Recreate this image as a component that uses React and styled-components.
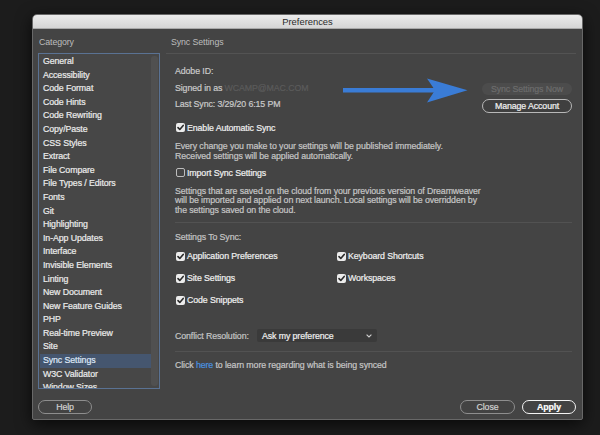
import React from "react";
import styled, { createGlobalStyle } from "styled-components";

const categories = [
  "General",
  "Accessibility",
  "Code Format",
  "Code Hints",
  "Code Rewriting",
  "Copy/Paste",
  "CSS Styles",
  "Extract",
  "File Compare",
  "File Types / Editors",
  "Fonts",
  "Git",
  "Highlighting",
  "In-App Updates",
  "Interface",
  "Invisible Elements",
  "Linting",
  "New Document",
  "New Feature Guides",
  "PHP",
  "Real-time Preview",
  "Site",
  "Sync Settings",
  "W3C Validator",
  "Window Sizes",
];

const syncItems = [
  { label: "Application Preferences", checked: true },
  { label: "Keyboard Shortcuts", checked: true },
  { label: "Site Settings", checked: true },
  { label: "Workspaces", checked: true },
  { label: "Code Snippets", checked: true },
];

const Check = ({ checked }) => (
  <CheckBox $checked={checked}>
    {checked && (
      <svg width="9" height="9" viewBox="0 0 9 9">
        <path
          d="M2 4.6 L3.8 6.4 L7.2 2.4"
          fill="none"
          stroke="#2b2b2b"
          strokeWidth="1.6"
          strokeLinecap="round"
          strokeLinejoin="round"
        />
      </svg>
    )}
  </CheckBox>
);

const App = () => {
  return (
    <Screen>
      <GlobalStyle />
      <Dialog>
        <TitleBar>Preferences</TitleBar>
        <Body>
          <Columns>
            <SideHeading>Category</SideHeading>
            <MainHeading>Sync Settings</MainHeading>
            <ListBox>
              <ListItems>
                {categories.map((name) => (
                  <ListItem key={name} $selected={name === "Sync Settings"}>
                    {name}
                  </ListItem>
                ))}
              </ListItems>
              <ScrollTrack>
                <ScrollThumb />
              </ScrollTrack>
            </ListBox>
            <Panel>
              <TopSection>
                <InfoColumn>
                  <InfoLine>Adobe ID:</InfoLine>
                  <InfoLine>
                    Signed in as <Email>WCAMP@MAC.COM</Email>
                  </InfoLine>
                  <InfoLine>Last Sync: 3/29/20 6:15 PM</InfoLine>
                </InfoColumn>
                <ButtonStack>
                  <SyncNowButton disabled>Sync Settings Now</SyncNowButton>
                  <ManageButton>Manage Account</ManageButton>
                </ButtonStack>
              </TopSection>

              <CheckRow $mt={7.5}>
                <Check checked />
                <CheckLabel>Enable Automatic Sync</CheckLabel>
              </CheckRow>
              <Para $mt={6} $lh={10}>
                Every change you make to your settings will be published
                immediately.
                <br />
                Received settings will be applied automatically.
              </Para>

              <CheckRow $mt={5}>
                <Check checked={false} />
                <CheckLabel>Import Sync Settings</CheckLabel>
              </CheckRow>
              <Para $mt={7} $lh={9.7}>
                Settings that are saved on the cloud from your previous version
                of Dreamweaver
                <br />
                will be imported and applied on next launch. Local settings will
                be overridden by
                <br />
                the settings saved on the cloud.
              </Para>

              <Separator $mt={6} />
              <SectionLabel>Settings To Sync:</SectionLabel>
              <SyncGrid>
                {syncItems.map((item) => (
                  <CheckRow key={item.label}>
                    <Check checked={item.checked} />
                    <CheckLabel>{item.label}</CheckLabel>
                  </CheckRow>
                ))}
              </SyncGrid>

              <ConflictRow>
                <ConflictLabel>Conflict Resolution:</ConflictLabel>
                <Select>
                  Ask my preference
                  <svg width="6" height="4" viewBox="0 0 6 4">
                    <path
                      d="M0.6 0.6 L3 3 L5.4 0.6"
                      fill="none"
                      stroke="#cfcfcf"
                      strokeWidth="1.1"
                    />
                  </svg>
                </Select>
              </ConflictRow>
              <Separator $mt={8.5} />
              <HelpLine>
                Click <LinkText>here</LinkText> to learn more regarding what is
                being synced
              </HelpLine>

              <Arrow width="126" height="27" viewBox="0 0 126 27">
                <rect x="0" y="11" width="92" height="4.5" fill="#3a7cd6" />
                <path d="M84 1.5 L124.5 13.2 L84 25.5 L92 13.2 Z" fill="#3a7cd6" />
              </Arrow>
            </Panel>
          </Columns>
          <Footer>
            <PillButton>Help</PillButton>
            <FooterRight>
              <PillButton $w={55}>Close</PillButton>
              <PillButton $primary>Apply</PillButton>
            </FooterRight>
          </Footer>
        </Body>
      </Dialog>
    </Screen>
  );
};

export default App;

const GlobalStyle = createGlobalStyle`
  html, body {
    margin: 0;
    padding: 0;
    background: #1c1c1c;
  }
  body {
    font-family: "Liberation Sans", Arial, sans-serif;
    font-size: 8.8px;
    letter-spacing: -0.1px;
    -webkit-text-stroke: 0.2px currentColor;
  }
`;

const Screen = styled.div`
  width: 600px;
  height: 435px;
  box-sizing: border-box;
  padding: 14px 0 0 32px;
  background: #1c1c1c;
  overflow: hidden;
`;

const Dialog = styled.div`
  width: 551px;
  height: 406px;
  box-sizing: border-box;
  display: flex;
  flex-direction: column;
  border: 1px solid #686868;
  border-radius: 5px 5px 2px 2px;
  background: #444444;
  overflow: hidden;
  box-shadow: 0 4px 16px rgba(0, 0, 0, 0.7);
`;

const TitleBar = styled.div`
  height: 14px;
  flex-shrink: 0;
  display: flex;
  align-items: center;
  justify-content: center;
  background: linear-gradient(#ebebeb, #d5d5d5);
  border-bottom: 1px solid #a9a9a9;
  box-sizing: border-box;
  color: #2a2a2a;
  font-size: 9.4px;
  letter-spacing: 0;
  -webkit-text-stroke: 0;
`;

const Body = styled.div`
  flex: 1;
  display: flex;
  flex-direction: column;
  padding: 7px 6px 0 5px;
`;

const Columns = styled.div`
  display: grid;
  grid-template-columns: 122px 410px;
  grid-template-rows: 12px 336px;
  column-gap: 6px;
  row-gap: 5px;
`;

const SideHeading = styled.div`
  padding-left: 1px;
  line-height: 12px;
  color: #bdbdbd;
  -webkit-text-stroke: 0;
`;

const MainHeading = styled(SideHeading)`
  padding-left: 5px;
`;

const ListBox = styled.div`
  display: flex;
  box-sizing: border-box;
  border: 1px solid #5a7293;
  background: #474747;
  overflow: hidden;
`;

const ListItems = styled.div`
  flex: 1;
  padding-top: 1px;
  padding-left: 1px;
`;

const ListItem = styled.div`
  height: 13.6px;
  line-height: 13.6px;
  padding-left: 3px;
  white-space: nowrap;
  color: ${({ $selected }) => ($selected ? "#dfe8f7" : "#ececec")};
  background: ${({ $selected }) => ($selected ? "#45566f" : "transparent")};
`;

const ScrollTrack = styled.div`
  width: 7px;
  margin-right: 1px;
  padding: 2px 0 2px;
  box-sizing: border-box;
  display: flex;
`;

const ScrollThumb = styled.div`
  flex: 1;
  border-radius: 3px;
  background: #505050;
`;

const Panel = styled.div`
  position: relative;
  box-sizing: border-box;
  border-top: 1px solid #535353;
  padding: 0 4px 0 9px;
  color: #cacaca;
`;

const TopSection = styled.div`
  display: flex;
  justify-content: space-between;
  margin-top: 9px;
`;

const InfoColumn = styled.div`
  display: flex;
  flex-direction: column;
`;

const InfoLine = styled.div`
  line-height: 16.5px;
  white-space: nowrap;
`;

const Email = styled.span`
  color: #5b5b5b;
`;

const ButtonStack = styled.div`
  display: flex;
  flex-direction: column;
  align-items: flex-end;
  gap: 4px;
  padding-top: 20px;
`;

const SyncNowButton = styled.button`
  width: 90px;
  height: 12px;
  padding: 0;
  border: none;
  border-radius: 6px;
  background: #4c4c4c;
  color: #6c6c6c;
  font: inherit;
  letter-spacing: inherit;
`;

const ManageButton = styled.button`
  width: 90px;
  height: 14px;
  padding: 0;
  box-sizing: border-box;
  border: 1px solid #b8b8b8;
  border-radius: 7px;
  background: #3f3f3f;
  color: #f2f2f2;
  font: inherit;
  letter-spacing: inherit;
`;

const CheckRow = styled.div`
  display: flex;
  align-items: center;
  height: 14px;
  margin-top: ${({ $mt }) => $mt || 0}px;
  white-space: nowrap;
`;

const CheckBox = styled.span`
  width: 9px;
  height: 9px;
  margin-left: 1px;
  margin-right: 2px;
  box-sizing: border-box;
  border-radius: 2px;
  display: flex;
  align-items: center;
  justify-content: center;
  background: ${({ $checked }) => ($checked ? "#ececec" : "transparent")};
  border: ${({ $checked }) => ($checked ? "none" : "1px solid #bdbdbd")};
`;

const CheckLabel = styled.span`
  color: #f0f0f0;
`;

const Para = styled.div`
  margin-top: ${({ $mt }) => $mt || 0}px;
  line-height: ${({ $lh }) => $lh}px;
  white-space: nowrap;
  color: #c6c6c6;
`;

const Separator = styled.div`
  height: 1px;
  background: #525252;
  margin-top: ${({ $mt }) => $mt || 0}px;
`;

const SectionLabel = styled.div`
  margin-top: 8px;
  line-height: 12px;
  color: #c4c4c4;
`;

const SyncGrid = styled.div`
  display: grid;
  grid-template-columns: 161px 1fr;
  grid-auto-rows: 22px;
  align-items: center;
  margin-top: 2.5px;
`;

const ConflictRow = styled.div`
  display: flex;
  align-items: center;
  height: 14px;
  margin-top: 17.5px;
`;

const ConflictLabel = styled.span`
  width: 82px;
  color: #c4c4c4;
`;

const Select = styled.div`
  width: 120px;
  height: 13px;
  box-sizing: border-box;
  padding: 0 5px 0 5px;
  display: flex;
  align-items: center;
  justify-content: space-between;
  border-radius: 2px;
  background: #3a3a3a;
  color: #f0f0f0;
`;

const HelpLine = styled.div`
  margin-top: 7px;
  line-height: 12px;
  color: #c6c6c6;
`;

const LinkText = styled.span`
  color: #4a92e0;
`;

const Arrow = styled.svg`
  position: absolute;
  left: 177px;
  top: 23px;
`;

const Footer = styled.div`
  display: flex;
  justify-content: space-between;
  margin-top: 11px;
`;

const FooterRight = styled.div`
  display: flex;
  gap: 7px;
`;

const PillButton = styled.button`
  width: ${({ $w }) => $w || 54}px;
  height: 14px;
  padding: 0;
  box-sizing: border-box;
  border-radius: 7px;
  border: ${({ $primary }) =>
    $primary ? "1.6px solid #f4f4f4" : "1px solid #8e8e8e"};
  background: #434343;
  color: ${({ $primary }) => ($primary ? "#ffffff" : "#d2d2d2")};
  font: inherit;
  font-weight: ${({ $primary }) => ($primary ? 700 : 400)};
  letter-spacing: inherit;
`;
